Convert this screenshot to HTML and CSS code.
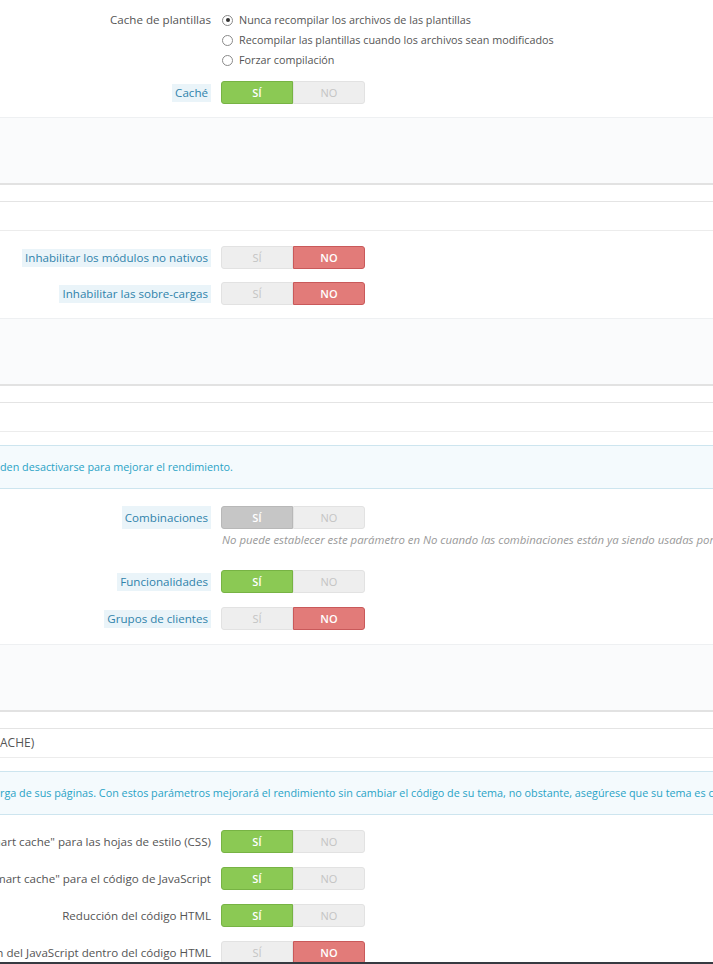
FILE: index.html
```html
<!DOCTYPE html>
<html lang="es">

<head>
    <meta charset="UTF-8">
    <meta name="viewport" content="width=device-width, initial-scale=1.0">
    <title>Rendimiento</title>
    <link rel="stylesheet" href="styles.css">
</head>

<body>

    <!-- Smarty panel (heading is above the fold) -->
    <div class="panel panel-first">
        <div class="form-wrapper">
            <div class="form-group radio-group">
                <div class="control-label"><span>Cache de plantillas</span></div>
                <div class="radio-list">
                    <label class="radio"><span class="dot checked"></span>Nunca recompilar los archivos de las plantillas</label>
                    <label class="radio"><span class="dot"></span>Recompilar las plantillas cuando los archivos sean modificados</label>
                    <label class="radio"><span class="dot"></span>Forzar compilación</label>
                </div>
            </div>
            <div class="form-group">
                <div class="control-label"><span class="hint">Caché</span></div>
                <div class="switch"><span class="on">SÍ</span><span>NO</span></div>
            </div>
        </div>
        <div class="panel-footer"></div>
    </div>

    <!-- Debug mode panel -->
    <div class="panel">
        <div class="panel-heading"></div>
        <div class="form-wrapper">
            <div class="form-group">
                <div class="control-label"><span class="hint">Inhabilitar los módulos no nativos</span></div>
                <div class="switch"><span>SÍ</span><span class="off">NO</span></div>
            </div>
            <div class="form-group">
                <div class="control-label"><span class="hint">Inhabilitar las sobre-cargas</span></div>
                <div class="switch"><span>SÍ</span><span class="off">NO</span></div>
            </div>
        </div>
        <div class="panel-footer"></div>
    </div>

    <!-- Optional features panel -->
    <div class="panel panel-features">
        <div class="panel-heading"></div>
        <div class="form-wrapper has-alert">
            <div class="alert">den desactivarse para mejorar el rendimiento.</div>
            <div class="form-group with-help">
                <div class="control-label"><span class="hint">Combinaciones</span></div>
                <div class="field">
                    <div class="switch"><span class="disabled">SÍ</span><span>NO</span></div>
                    <p class="help-block">No puede establecer este parámetro en No cuando las combinaciones están ya siendo usadas por algunos de sus productos</p>
                </div>
            </div>
            <div class="form-group">
                <div class="control-label"><span class="hint">Funcionalidades</span></div>
                <div class="switch"><span class="on">SÍ</span><span>NO</span></div>
            </div>
            <div class="form-group">
                <div class="control-label"><span class="hint">Grupos de clientes</span></div>
                <div class="switch"><span>SÍ</span><span class="off">NO</span></div>
            </div>
        </div>
        <div class="panel-footer"></div>
    </div>

    <!-- CCC panel -->
    <div class="panel panel-ccc">
        <div class="panel-heading">ACHE)</div>
        <div class="form-wrapper has-alert">
            <div class="alert">rga de sus páginas. Con estos parámetros mejorará el rendimiento sin cambiar el código de su tema, no obstante, asegúrese que su tema es compatible.</div>
            <div class="form-group">
                <div class="control-label"><span>Usar "smart cache" para las hojas de estilo (CSS)</span></div>
                <div class="switch"><span class="on">SÍ</span><span>NO</span></div>
            </div>
            <div class="form-group">
                <div class="control-label"><span>Usar "smart cache" para el código de JavaScript</span></div>
                <div class="switch"><span class="on">SÍ</span><span>NO</span></div>
            </div>
            <div class="form-group">
                <div class="control-label"><span>Reducción del código HTML</span></div>
                <div class="switch"><span class="on">SÍ</span><span>NO</span></div>
            </div>
            <div class="form-group">
                <div class="control-label"><span>Compresión del JavaScript dentro del código HTML</span></div>
                <div class="switch"><span>SÍ</span><span class="off">NO</span></div>
            </div>
        </div>
    </div>

    <div class="bottom-bar"></div>

</body>

</html>
```

FILE: styles.css
```css
body {
    margin: 0;
    background: #fff;
    font-family: "Open Sans", "Liberation Sans", sans-serif;
    font-size: 11.6px;
    color: #555;
    overflow: hidden;
}

/* Panels */
.panel {
    border-top: 1px solid #e4e4e4;
    border-bottom: 2px solid #e2e2e2;
    margin-bottom: 16px;
}

.panel-first {
    border-top: none;
}

.panel-heading {
    height: 28px;
    line-height: 28px;
    border-bottom: 1px solid #ececec;
    font-size: 12px;
    text-transform: uppercase;
    color: #555;
    white-space: nowrap;
}

.form-wrapper {
    padding-top: 15px;
}

.form-wrapper.has-alert {
    padding-top: 13px;
}

.panel-first .form-wrapper {
    padding-top: 10px;
}

.panel-footer {
    height: 65px;
    background: #fafbfc;
    border-top: 1px solid #eef0f2;
}

/* Rows */
.form-group {
    display: flex;
    align-items: center;
    margin-bottom: 13px;
}

.panel-features .form-group,
.panel-ccc .form-group {
    margin-bottom: 14px;
}

.control-label {
    width: 211px;
    flex: none;
    margin-right: 10px;
    display: flex;
    justify-content: flex-end;
    white-space: nowrap;
    line-height: 18px;
}

.hint {
    background: #eaf4f9;
    color: #3083ab;
    padding: 0 3px;
}

/* Radio list */
.radio-group {
    align-items: flex-start;
    margin-bottom: 11px;
}

.radio-group .control-label {
    line-height: 20px;
}

.radio-list {
    display: flex;
    flex-direction: column;
}

.radio {
    display: flex;
    align-items: center;
    line-height: 20px;
    font-size: 10.8px;
    white-space: nowrap;
}

.dot {
    width: 9px;
    height: 9px;
    border: 1px solid #8a8a8a;
    border-radius: 50%;
    margin: 0 6px 0 1px;
    position: relative;
    background: #fff;
}

.dot.checked::after {
    content: "";
    position: absolute;
    left: 2.5px;
    top: 2.5px;
    width: 4px;
    height: 4px;
    border-radius: 50%;
    background: #333;
}

/* Yes/No switch */
.switch {
    display: flex;
    width: 144px;
    height: 23px;
    flex: none;
}

.switch span {
    flex: 1;
    text-align: center;
    line-height: 21px;
    font-size: 11px;
    color: #c4c4c4;
    background: #eeeeee;
    border: 1px solid #e2e2e2;
}

.switch span:first-child {
    border-radius: 3px 0 0 3px;
}

.switch span:last-child {
    border-radius: 0 3px 3px 0;
}

.switch .on {
    background: #8bc954;
    border-color: #77b344;
    color: #fff;
    font-weight: 600;
    border-radius: 3px;
}

.switch .off {
    background: #e27b79;
    border-color: #c9595a;
    color: #fff;
    font-weight: 600;
    border-radius: 3px;
}

.switch .disabled {
    background: #c6c6c6;
    border-color: #b8b8b8;
    color: #fff;
    font-weight: 600;
    border-radius: 3px;
}

/* Help text under a switch */
.panel-features .with-help {
    align-items: flex-start;
    margin-bottom: 21px;
}

.with-help .control-label {
    line-height: 23px;
}

.help-block {
    margin: 2px 0 0 1px;
    font-style: italic;
    color: #999;
    font-size: 11.4px;
    line-height: 18px;
    white-space: nowrap;
}

/* Info alert */
.alert {
    margin: 0 0 17px;
    height: 42px;
    line-height: 42px;
    background: #f4fafd;
    border-top: 1px solid #cde5ef;
    border-bottom: 1px solid #cde5ef;
    color: #29a3c6;
    font-size: 10.8px;
    white-space: nowrap;
}

.panel-ccc .alert {
    margin-bottom: 15px;
}

.bottom-bar {
    position: fixed;
    left: 0;
    right: 0;
    bottom: 0;
    height: 2px;
    background: #363a41;
}
```
